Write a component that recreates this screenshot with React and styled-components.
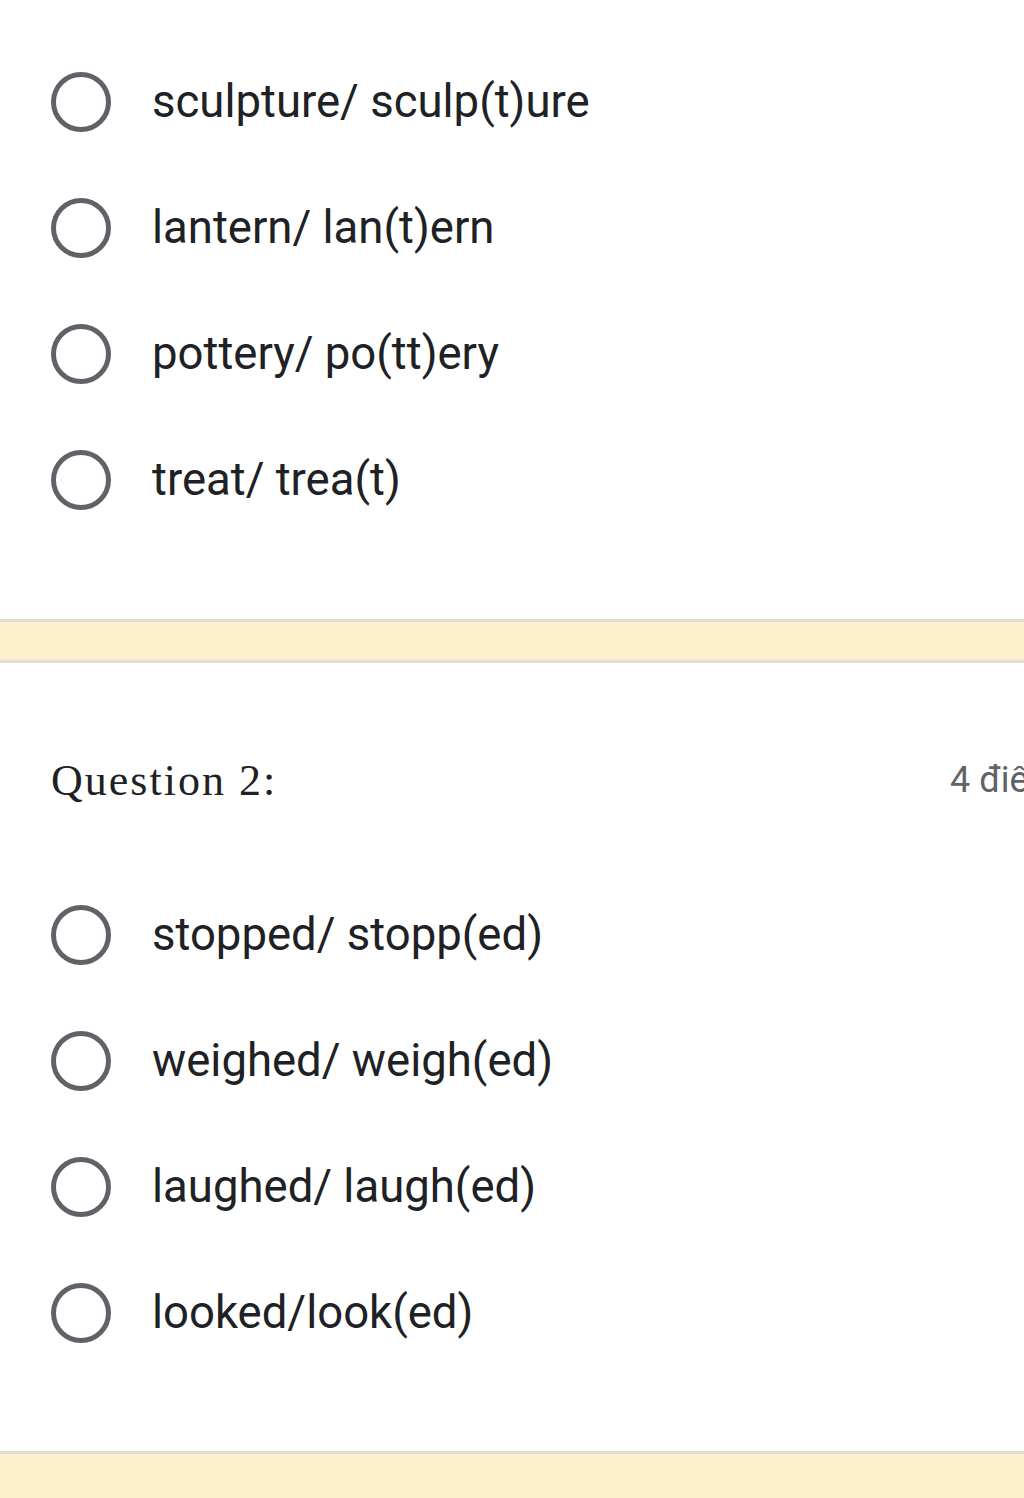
import styled, { createGlobalStyle } from 'styled-components';

const GlobalStyle = createGlobalStyle`
  html, body {
    margin: 0;
    padding: 0;
    background: #fdefcc;
    overflow-x: hidden;
  }
  body {
    font-family: Roboto, "Noto Sans", Arial, sans-serif;
  }
`;

const cau1 = [
  'sculpture/ sculp(t)ure',
  'lantern/ lan(t)ern',
  'pottery/ po(tt)ery',
  'treat/ trea(t)',
];

const cau2 = [
  'stopped/ stopp(ed)',
  'weighed/ weigh(ed)',
  'laughed/ laugh(ed)',
  'looked/look(ed)',
];

function LuaChon({ text }) {
  return (
    <Dong>
      <Tron />
      <Nhan>{text}</Nhan>
    </Dong>
  );
}

export default function App() {
  return (
    <>
      <GlobalStyle />
      <Trang>
        <The $top={39} $bottom={76} $noTopBorder>
          {cau1.map((t) => (
            <LuaChon key={t} text={t} />
          ))}
        </The>
        <Khoang />
        <The $top={87} $bottom={75}>
          <TieuDe>
            <CauHoi>Question 2:</CauHoi>
            <Diem>4 điểm</Diem>
          </TieuDe>
          {cau2.map((t) => (
            <LuaChon key={t} text={t} />
          ))}
        </The>
        <Khoang $cuoi />
      </Trang>
    </>
  );
}

const Trang = styled.div`
  width: 1024px;
  min-height: 1498px;
  overflow: hidden;
  background: #fdefcc;
`;

const The = styled.div`
  background: #ffffff;
  padding: ${(p) => p.$top}px 0 ${(p) => p.$bottom}px 51px;
  border-top: ${(p) => (p.$noTopBorder ? 'none' : '3px solid #e0dcd4')};
  border-bottom: 3px solid #e0dcd4;
`;

const Khoang = styled.div`
  height: ${(p) => (p.$cuoi ? 44 : 38)}px;
  background: #fdefcc;
`;

const Dong = styled.div`
  display: flex;
  align-items: center;
  height: 126px;
  gap: 41px;
`;

const Tron = styled.span`
  box-sizing: border-box;
  width: 60px;
  height: 60px;
  border: 5px solid #5f6368;
  border-radius: 50%;
  flex-shrink: 0;
`;

const Nhan = styled.span`
  font-family: Roboto, Arial, sans-serif;
  font-size: 45.5px;
  color: #202124;
  white-space: nowrap;
  margin-top: -2px;
`;

const TieuDe = styled.div`
  display: grid;
  grid-template-columns: 899px auto;
  align-items: center;
  height: 60px;
  margin-bottom: 62px;
`;

const CauHoi = styled.div`
  font-family: "Liberation Serif", "Times New Roman", serif;
  font-size: 44px;
  color: #202124;
  letter-spacing: 2px;
  white-space: nowrap;
`;

const Diem = styled.div`
  font-family: Roboto, Arial, sans-serif;
  font-size: 36px;
  color: #5f6368;
  white-space: nowrap;
`;
